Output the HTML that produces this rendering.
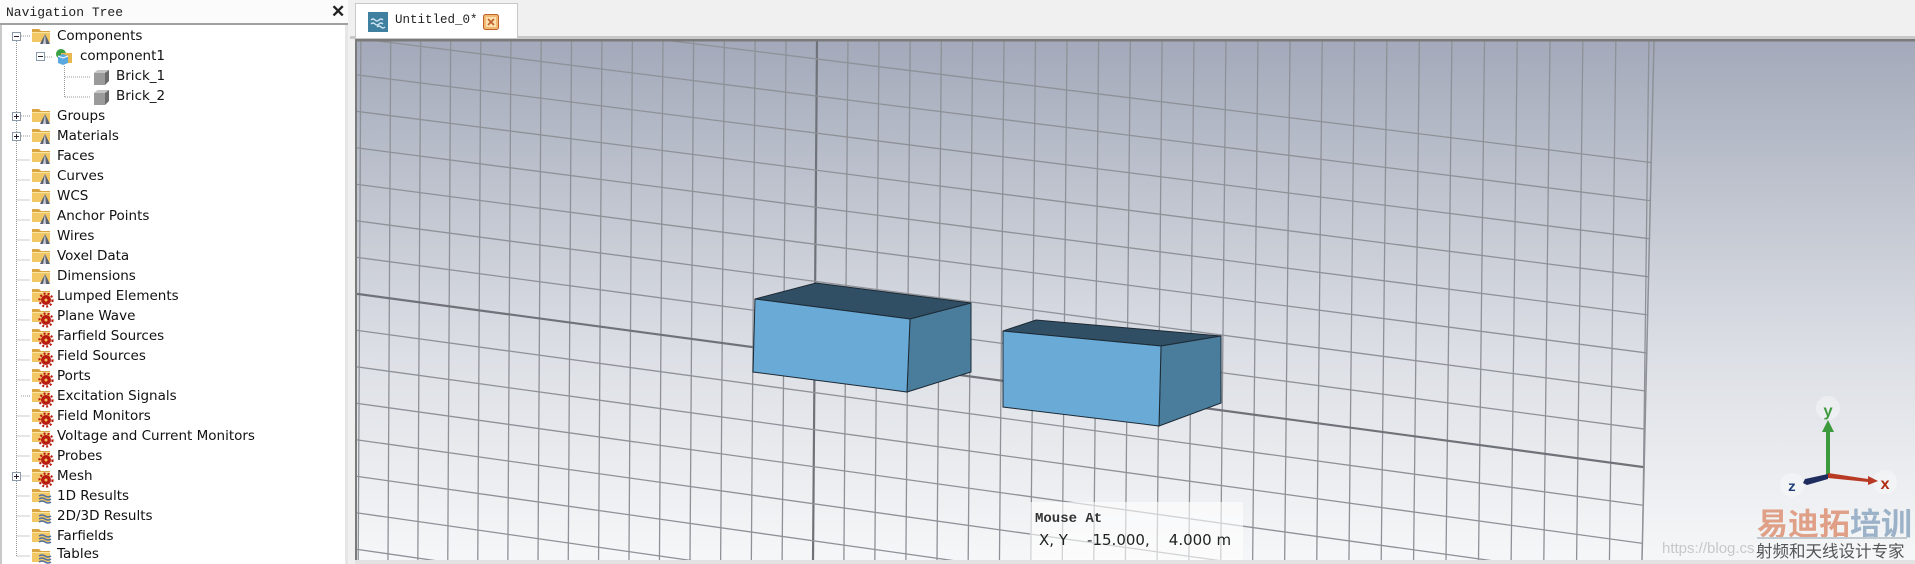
<!DOCTYPE html>
<html><head><meta charset="utf-8">
<style>
html,body{margin:0;padding:0;width:1915px;height:564px;overflow:hidden;background:#f0f0f0;font-family:"DejaVu Sans","Liberation Sans",sans-serif;}
#tree{position:absolute;left:0;top:0;width:348px;height:564px;background:#fff;overflow:hidden}
#hdr{position:absolute;left:0;top:0;width:348px;height:23px;background:#fbfbfb;border-bottom:2px solid #a0a0a0;font-family:"Liberation Mono",monospace;font-size:13px;line-height:24px;color:#222;}
#hdr span{position:absolute;left:6px;top:1px}
#hdr b{position:absolute;left:331px;top:0;font-size:17px;font-family:"Liberation Sans",sans-serif}
#tree .lb{position:absolute;left:0;top:25px;width:2px;height:539px;background:#c8c8c8}
#tree .rb{position:absolute;left:345px;top:25px;width:3px;height:539px;background:#e6e6e6}
.row{position:absolute;height:20px;font-size:13.5px;line-height:20px;color:#111;white-space:nowrap}
#tab{position:absolute;left:355px;top:3px;width:161px;height:34px;background:#fff;border:1px solid #c8c8c8;border-bottom:none;}
#tab span{position:absolute;left:39px;top:9px;font-family:"Liberation Mono",monospace;font-size:12.5px;color:#222}
#vp{position:absolute;left:355px;top:39px;width:1560px;height:525px}
</style></head><body>
<div id="tree">
<div id="hdr"><span>Navigation Tree</span><b>✕</b></div>
<div class="lb"></div><div class="rb"></div>
<svg width="348" height="564" style="position:absolute;left:0;top:0">
<defs>
<g id="fold"><path d="M0 2h7l2 2h9v11H0z" fill="#d9a441"/><path d="M0 5h18v10H0z" fill="#f2c766"/><path d="M0 5h18v1H0z" fill="#fbe3a0"/></g>
<g id="cone"><use href="#fold"/><path d="M13 7l-5 10h10z" fill="#5a6070"/><path d="M13 7l-2 10h3z" fill="#c9ccd4"/></g>
<g id="gear"><use href="#fold"/><circle cx="14" cy="13" r="5" fill="#b81c10"/><circle cx="14" cy="13" r="6.5" fill="none" stroke="#b81c10" stroke-width="2.2" stroke-dasharray="2 2"/><circle cx="14" cy="13" r="1.5" fill="#f5c060"/></g>
<g id="wave"><use href="#fold"/><path d="M7 9q3-2 6 0t6 0M7 12q3-2 6 0t6 0M7 15q3-2 6 0t6 0" stroke="#5070a0" stroke-width="1.4" fill="none"/></g>
<g id="brick"><path d="M2 5l4-3h11v11l-4 4H2z" fill="#6b6b6b"/><path d="M2 5h11v12H2z" fill="#9a9a9a"/><path d="M2 5l4-3h11l-4 3z" fill="#c4c4c4"/></g>
<g id="comp"><circle cx="6" cy="6" r="5" fill="#3aa040"/><path d="M6 5h11v10H6z" fill="#e8b850"/><path d="M3 8l5-2 5 2v7l-5 2-5-2z" fill="#5aa8e0"/><path d="M3 8l5 2 5-2" stroke="#fff" fill="none"/></g>
<g id="minus"><rect x="0.5" y="0.5" width="8" height="8" fill="#fff" stroke="#8a9aaa"/><path d="M2 4.5h5" stroke="#223"/></g>
<g id="plus"><rect x="0.5" y="0.5" width="8" height="8" fill="#fff" stroke="#8a9aaa"/><path d="M2 4.5h5M4.5 2v5" stroke="#223"/></g>
</defs>
<g stroke="#999" stroke-dasharray="1 1" fill="none">
<path d="M16.5 41V556M21 36h10M21 116h10M21 136h10M21 396h10"/>
<path d="M16.5 160h14M16.5 180h14M16.5 200h14M16.5 220h14M16.5 240h14M16.5 260h14M16.5 280h14M16.5 300h14M16.5 320h14M16.5 340h14M16.5 360h14M16.5 380h14M16.5 416h14M16.5 436h14M16.5 456h14M16.5 476h14M16.5 496h14M16.5 516h14M16.5 536h14M16.5 556h14"/>
<path d="M40.5 61V57M45 57h8M64.5 66V97M65 77h25M65 97h25"/>
</g>
<use href="#minus" x="12" y="32"/><use href="#cone" x="32" y="27"/>
<use href="#minus" x="36" y="52"/><use href="#comp" x="55" y="48"/>
<use href="#brick" x="92" y="68"/><use href="#brick" x="92" y="88"/>
<use href="#plus" x="12" y="112"/><use href="#cone" x="32" y="107"/>
<use href="#plus" x="12" y="132"/><use href="#cone" x="32" y="127"/>
<use href="#cone" x="32" y="147"/><use href="#cone" x="32" y="167"/><use href="#cone" x="32" y="187"/><use href="#cone" x="32" y="207"/><use href="#cone" x="32" y="227"/><use href="#cone" x="32" y="247"/><use href="#cone" x="32" y="267"/>
<use href="#gear" x="32" y="287"/><use href="#gear" x="32" y="307"/><use href="#gear" x="32" y="327"/><use href="#gear" x="32" y="347"/><use href="#gear" x="32" y="367"/><use href="#gear" x="32" y="387"/><use href="#gear" x="32" y="407"/><use href="#gear" x="32" y="427"/><use href="#gear" x="32" y="447"/>
<use href="#plus" x="12" y="472"/><use href="#gear" x="32" y="467"/>
<use href="#wave" x="32" y="487"/><use href="#wave" x="32" y="507"/><use href="#wave" x="32" y="527"/><use href="#wave" x="32" y="547"/>
</svg>
<div class="row" style="left:57px;top:26px">Components</div>
<div class="row" style="left:80px;top:46px">component1</div>
<div class="row" style="left:116px;top:66px">Brick_1</div>
<div class="row" style="left:116px;top:86px">Brick_2</div>
<div class="row" style="left:57px;top:106px">Groups</div>
<div class="row" style="left:57px;top:126px">Materials</div>
<div class="row" style="left:57px;top:146px">Faces</div>
<div class="row" style="left:57px;top:166px">Curves</div>
<div class="row" style="left:57px;top:186px">WCS</div>
<div class="row" style="left:57px;top:206px">Anchor Points</div>
<div class="row" style="left:57px;top:226px">Wires</div>
<div class="row" style="left:57px;top:246px">Voxel Data</div>
<div class="row" style="left:57px;top:266px">Dimensions</div>
<div class="row" style="left:57px;top:286px">Lumped Elements</div>
<div class="row" style="left:57px;top:306px">Plane Wave</div>
<div class="row" style="left:57px;top:326px">Farfield Sources</div>
<div class="row" style="left:57px;top:346px">Field Sources</div>
<div class="row" style="left:57px;top:366px">Ports</div>
<div class="row" style="left:57px;top:386px">Excitation Signals</div>
<div class="row" style="left:57px;top:406px">Field Monitors</div>
<div class="row" style="left:57px;top:426px">Voltage and Current Monitors</div>
<div class="row" style="left:57px;top:446px">Probes</div>
<div class="row" style="left:57px;top:466px">Mesh</div>
<div class="row" style="left:57px;top:486px">1D Results</div>
<div class="row" style="left:57px;top:506px">2D/3D Results</div>
<div class="row" style="left:57px;top:526px">Farfields</div>
<div class="row" style="left:57px;top:544px">Tables</div>
</div>

<div style="position:absolute;left:350px;top:36px;width:1565px;height:3px;background:#c8c8c8"></div>
<div id="tab">
<svg width="20" height="20" style="position:absolute;left:12px;top:8px"><rect width="20" height="20" fill="#3f7f9f"/><path d="M3 8q2-2 4 0t4 0 4 0M3 12q2-2 4 0t4 0 4 0M9 15q2-2 4 0t4 0" stroke="#cfe6f2" stroke-width="1.3" fill="none"/></svg>
<span>Untitled_0*</span>
<svg width="16" height="16" style="position:absolute;left:127px;top:10px"><rect x="0.5" y="0.5" width="15" height="15" rx="2" fill="#f0b870" stroke="#c0602a"/><rect x="3" y="3" width="10" height="10" fill="#fbe2b0"/><path d="M5 5l6 6M11 5l-6 6" stroke="#c0602a" stroke-width="1.6"/></svg>
</div>

<svg id="vp" width="1560" height="525" viewBox="355 39 1560 525">
<defs>
<linearGradient id="bg" x1="0" y1="0" x2="0" y2="1">
<stop offset="0" stop-color="#a3a9ba"/><stop offset="0.35" stop-color="#c5c9d3"/><stop offset="0.6" stop-color="#dcdfe5"/><stop offset="1" stop-color="#f6f7f8"/>
</linearGradient>
<clipPath id="gc"><path d="M357 41H1654L1642 560H357z"/></clipPath>
</defs>
<rect x="355" y="39" width="1560" height="525" fill="url(#bg)"/>
<g id="grid" clip-path="url(#gc)" stroke="#8e9197" stroke-width="1.3" fill="none"></g>
<path d="M1654 41L1642 560" stroke="#8e9197" stroke-width="1.5"/>
<path d="M355 40H1915" stroke="#7a7a7a" stroke-width="3"/>
<path d="M356 40V562" stroke="#7a7a7a" stroke-width="2"/>
<rect x="355" y="560" width="1560" height="4" fill="#e2e2e2"/>
<path d="M755 299L816 283L971 303L910 319z" fill="#314f64" stroke="#1c2a35"/>
<path d="M910 319L971 303L971 372L907 392z" fill="#4a7d9c" stroke="#1c2a35"/>
<path d="M755 299L910 319L907 392L753 372z" fill="#6aaad6" stroke="#1c2a35"/>
<path d="M1003 331L1036 320L1221 336L1161 346z" fill="#314f64" stroke="#1c2a35"/>
<path d="M1161 346L1221 336L1221 403L1159 426z" fill="#4a7d9c" stroke="#1c2a35"/>
<path d="M1003 331L1161 346L1159 426L1003 407z" fill="#6aaad6" stroke="#1c2a35"/>
<rect x="1030" y="502" width="213" height="58" fill="#fff" fill-opacity="0.6"/>
<text x="1035" y="522" font-family="Liberation Mono,monospace" font-weight="bold" font-size="14" fill="#333">Mouse At</text>
<text x="1039" y="545" font-family="DejaVu Sans,sans-serif" font-size="15" fill="#222" xml:space="preserve">X, Y    -15.000,    4.000 m</text>
<circle cx="1828" cy="408" r="12" fill="#fff" fill-opacity="0.35"/>
<circle cx="1885" cy="482" r="12" fill="#fff" fill-opacity="0.35"/>
<circle cx="1792" cy="485" r="12" fill="#fff" fill-opacity="0.35"/>
<path d="M1826 476V432h-4l6-12 6 12h-4v44z" fill="#3c9a3c"/>
<path d="M1828 473L1868 479v-3l10 5-10 4v-3L1828 478z" fill="#b83a24"/>
<path d="M1828 474L1805 479l-2 4 4 2 21-6z" fill="#1e2d5e"/>
<text x="1828" y="416" text-anchor="middle" font-family="Liberation Mono,monospace" font-weight="bold" font-size="16" fill="#3c9a3c">y</text>
<text x="1885" y="489" text-anchor="middle" font-family="Liberation Mono,monospace" font-weight="bold" font-size="16" fill="#b02a10">x</text>
<text x="1792" y="491" text-anchor="middle" font-family="Liberation Mono,monospace" font-weight="bold" font-size="14" fill="#1e3c78">z</text>
<text x="1662" y="553" font-family="Liberation Sans,sans-serif" font-size="15" fill="#c8c8c8">https://blog.cs</text>
<text x="1757" y="535" font-family="Liberation Sans,'Noto Sans CJK SC',sans-serif" font-weight="bold" font-size="31" fill="#e0a088">易迪拓<tspan fill="#9cb2c8">培训</tspan></text>
<rect x="1757" y="537" width="150" height="2" fill="#c0c8d0"/>
<text x="1756" y="557" font-family="'Noto Sans CJK SC',sans-serif" font-size="16.5" fill="#555">射频和天线设计专家</text>
</svg>
<script>
(function(){
var g=document.getElementById('grid'),s='';
function sp(x){return 29.8+(x-368)*0.0026;}
var xs=[817],x=817;
while(x<1700){x+=sp(x);xs.push(x);}
x=817;while(x>330){x-=sp(x);xs.unshift(x);}
xs.forEach(function(t){var b=t-4-(t-817)*0.003;var th=Math.abs(t-817)<1;
s+='<line x1="'+t+'" y1="41" x2="'+b+'" y2="562"'+(th?' stroke-width="2.2" stroke="#6f7278"':'')+'/>';});
for(var k=-8;k<=8;k++){var l=294+36.5*k,r=468+38.2*k;var sl=(r-l)/1292;s+='<line x1="357" y1="'+(l-sl)+'" x2="1660" y2="'+(r+sl*10)+'"'+(k==0?' stroke-width="2.2" stroke="#6f7278"':'')+'/>';}
g.innerHTML=s;
})();
</script>
</body></html>
